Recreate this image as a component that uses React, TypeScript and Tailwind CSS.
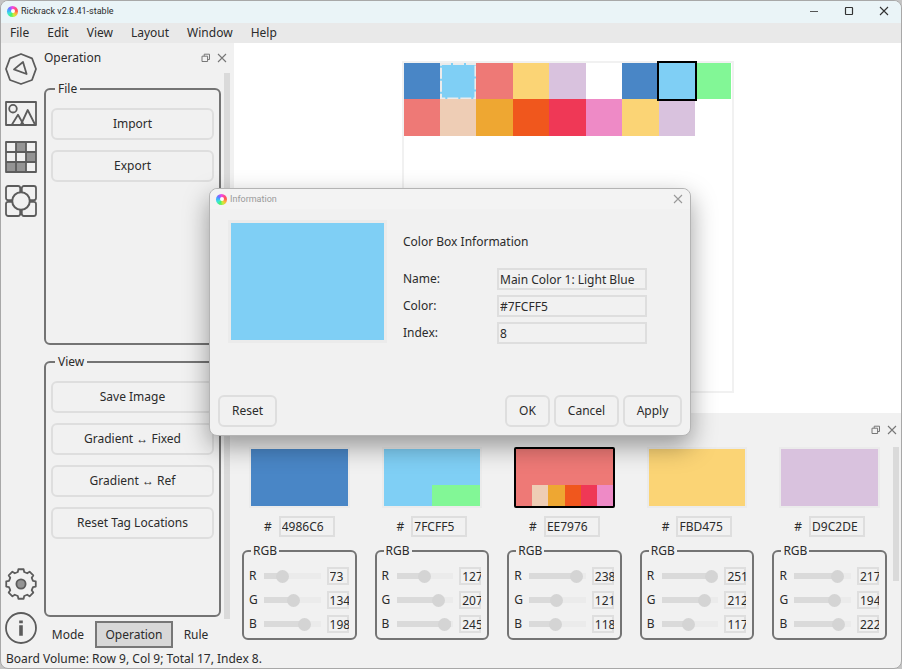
import type { ReactNode } from "react";

const INK = "#5c5c5c";

function ColorWheel() {
  return (
    <span
      aria-hidden="true"
      className="flex h-[11px] w-[11px] shrink-0 items-center justify-center rounded-full bg-[conic-gradient(#f04ae8,#ff4a8c,#ff5a4c,#ffb03c,#c8f03c,#4af06a,#3ce8d4,#3cb0ff,#7a6aff,#f04ae8)]"
    >
      <span className="h-1 w-1 rounded-full bg-white" />
    </span>
  );
}

function FloatIcon() {
  return (
    <svg width="10" height="10" viewBox="0 0 10 10" fill="none" stroke="#777" strokeWidth="1">
      <path d="M1 3.2h5.6v5.3H1zM3.2 3.2V1.2h5.3v5.3H6.6" />
    </svg>
  );
}

function CloseIcon({ color = "#777" }: { color?: string }) {
  return (
    <svg width="10" height="10" viewBox="0 0 10 10" fill="none" stroke={color} strokeWidth="1.1">
      <path d="M1 1l8 8M9 1l-8 8" />
    </svg>
  );
}

function Glyph({ children }: { children: ReactNode }) {
  return (
    <svg width="32" height="32" viewBox="0 0 32 32" fill="none" stroke={INK} strokeWidth="1.8" strokeLinejoin="round">
      {children}
    </svg>
  );
}

function WheelGlyph() {
  return (
    <Glyph>
      <path d="M16 1L27 5.3 31 16 27 27 16 31 5 27 1 16 5 5.3Z" />
      <path d="M18 9L9 16.4 21.6 21Z" />
    </Glyph>
  );
}

function ImageGlyph() {
  return (
    <Glyph>
      <rect x="1" y="5" width="30" height="23" />
      <circle cx="8" cy="11.7" r="3.8" />
      <path d="M7 27.5L13 17.7 18.5 27.5M16 27.5L22.7 13 30 27.5" />
    </Glyph>
  );
}

function BoardGlyph() {
  return (
    <Glyph>
      <path d="M11 1h10v10H11zM21 11h10v10H21zM1 21h20v10H1z" fill="#949494" stroke="none" />
      <path d="M1 1h30v30H1zM11 1v30M21 1v30M1 11h30M1 21h30" />
    </Glyph>
  );
}

function DepotGlyph() {
  return (
    <Glyph>
      <rect x="1" y="1" width="14.2" height="14.2" rx="2.2" />
      <rect x="16.8" y="1" width="14.2" height="14.2" rx="2.2" />
      <rect x="1" y="16.8" width="14.2" height="14.2" rx="2.2" />
      <rect x="16.8" y="16.8" width="14.2" height="14.2" rx="2.2" />
      <path d="M4.5 15.2h23v1.6h-23zM15.2 4.5h1.6v23h-1.6z" fill={INK} stroke="none" />
      <circle cx="16" cy="16" r="8.8" fill="#f1f1f1" strokeWidth="2" />
    </Glyph>
  );
}

function gearPath(): string {
  const points: string[] = [];
  for (let i = 0; i < 8; i++) {
    const mid = i * 45 - 90;
    const corners: [number, number][] = [
      [mid - 15, 12.4],
      [mid - 10, 15],
      [mid + 10, 15],
      [mid + 15, 12.4],
    ];
    for (const [deg, r] of corners) {
      const a = (deg * Math.PI) / 180;
      points.push(`${(16 + r * Math.cos(a)).toFixed(2)} ${(16 + r * Math.sin(a)).toFixed(2)}`);
    }
  }
  return `M${points.join("L")}Z`;
}

function GearGlyph() {
  return (
    <Glyph>
      <path d={gearPath()} />
      <circle cx="16" cy="16" r="4.6" fill="#949494" />
    </Glyph>
  );
}

function InfoGlyph() {
  return (
    <Glyph>
      <circle cx="16" cy="16" r="15" />
      <path d="M14.2 8.5h3.6v2.8h-3.6zM14.2 13.2h3.6v10.6h-3.6z" fill={INK} stroke="none" />
    </Glyph>
  );
}

function ToolButton({ label, children }: { label: string; children: ReactNode }) {
  return (
    <button type="button" aria-label={label} className="h-8 w-8">
      {children}
    </button>
  );
}

function PushButton({ children, className = "" }: { children: ReactNode; className?: string }) {
  return (
    <button
      type="button"
      className={`h-8 shrink-0 rounded-md border-2 border-[#dedede] bg-[#f1f1f1] text-center ${className}`}
    >
      {children}
    </button>
  );
}

function Group({ title, children }: { title: string; children: ReactNode }) {
  return (
    <fieldset className="min-w-0 flex-1 rounded-md border-2 border-[#747474] px-[5px]">
      <legend className="ml-1 px-[3px] leading-4">{title}</legend>
      <div className="flex flex-col gap-[10px] pt-[11px]">{children}</div>
    </fieldset>
  );
}

const MENUS = ["File", "Edit", "View", "Layout", "Window", "Help"];

const BOARD: { color: string; state?: "main" | "active" }[] = [
  { color: "#4986c6" },
  { color: "#7fcff5", state: "main" },
  { color: "#ee7976" },
  { color: "#fbd475" },
  { color: "#d9c2de" },
  { color: "#ffffff" },
  { color: "#4986c6" },
  { color: "#7fcff5", state: "active" },
  { color: "#82f796" },
  { color: "#ee7976" },
  { color: "#eecdb5" },
  { color: "#eea732" },
  { color: "#f0571d" },
  { color: "#ef3856" },
  { color: "#ee8ac6" },
  { color: "#fbd475" },
  { color: "#d9c2de" },
];

const PALETTE: { hex: string; rgb: [number, number, number]; subs: string[]; selected?: boolean }[] = [
  { hex: "4986C6", rgb: [73, 134, 198], subs: [] },
  { hex: "7FCFF5", rgb: [127, 207, 245], subs: ["#82f796"] },
  { hex: "EE7976", rgb: [238, 121, 118], subs: ["#eecdb5", "#eea732", "#f0571d", "#ef3856", "#ee8ac6"], selected: true },
  { hex: "FBD475", rgb: [251, 212, 117], subs: [] },
  { hex: "D9C2DE", rgb: [217, 194, 222], subs: [] },
];

function ChannelRow({ name, value, hex }: { name: string; value: number; hex: string }) {
  const id = `${hex}-${name}`;
  const stop = `${(value / 255) * 100}%`;
  return (
    <div className="flex h-[18px] items-center">
      <label htmlFor={id} className="w-[15px] shrink-0">
        {name}
      </label>
      <input
        id={id}
        type="range"
        min={0}
        max={255}
        defaultValue={value}
        style={{ backgroundImage: `linear-gradient(to right, #dadada ${stop}, #ebebeb ${stop})` }}
        className="h-[6px] min-w-0 flex-1 appearance-none [&::-webkit-slider-thumb]:h-[13px] [&::-webkit-slider-thumb]:w-[13px] [&::-webkit-slider-thumb]:appearance-none [&::-webkit-slider-thumb]:rounded-full [&::-webkit-slider-thumb]:bg-[#d4d4d4]"
      />
      <input
        type="text"
        aria-label={`${name} value of ${hex}`}
        defaultValue={value}
        className="ml-[6px] h-[18px] w-[22px] shrink-0 pl-[3px] shadow-[inset_0_0_0_2px_#dedede]"
      />
    </div>
  );
}

function PaletteColumn({ item }: { item: (typeof PALETTE)[number] }) {
  return (
    <div className="flex min-w-0 flex-col">
      <div
        className={`mx-[7px] flex h-[61px] items-end justify-end border-2 ${item.selected ? "rounded-xs border-black" : "border-[#ebebeb]"}`}
        style={{ backgroundColor: `#${item.hex}` }}
      >
        {item.subs.map((c) => (
          <span
            key={c}
            className={`h-[21px] ${item.subs.length === 1 ? "w-1/2" : "w-1/6"}`}
            style={{ backgroundColor: c }}
          />
        ))}
      </div>
      <div className="mt-2 flex items-center justify-center">
        <label htmlFor={`hex-${item.hex}`} className="mr-[7px]">
          #
        </label>
        <input
          id={`hex-${item.hex}`}
          type="text"
          defaultValue={item.hex}
          className="h-[21px] w-14 border-2 border-[#dedede] pl-px"
        />
      </div>
      <fieldset className="mt-[6px] min-w-0 rounded-md border-2 border-[#747474] pr-[6px] pl-[5px]">
        <legend className="ml-[2px] px-[2px] leading-4">RGB</legend>
        <div className="flex flex-col gap-[6px] pt-2 pb-[5px]">
          <ChannelRow name="R" value={item.rgb[0]} hex={item.hex} />
          <ChannelRow name="G" value={item.rgb[1]} hex={item.hex} />
          <ChannelRow name="B" value={item.rgb[2]} hex={item.hex} />
        </div>
      </fieldset>
    </div>
  );
}

function OperationDock() {
  return (
    <aside className="flex w-[193px] shrink-0 flex-col">
      <header className="flex h-[30px] shrink-0 items-center pr-[7px] pb-px pl-[3px]">
        <h2 className="flex-1">Operation</h2>
        <button type="button" aria-label="Float Operation" className="mr-[6px]">
          <FloatIcon />
        </button>
        <button type="button" aria-label="Close Operation">
          <CloseIcon />
        </button>
      </header>
      <div className="flex min-h-0 flex-1 pr-1 pl-[3px]">
        <div className="mr-[3px] flex min-w-0 flex-1 flex-col gap-[9px] pt-2 pb-[2px]">
          <Group title="File">
            <PushButton>Import</PushButton>
            <PushButton>Export</PushButton>
          </Group>
          <Group title="View">
            <PushButton>Save Image</PushButton>
            <PushButton>Gradient ↔ Fixed</PushButton>
            <PushButton>Gradient ↔ Ref</PushButton>
            <PushButton>Reset Tag Locations</PushButton>
          </Group>
        </div>
        <div className="w-[6px] bg-[#dadada]" />
      </div>
      <nav className="flex h-[29px] shrink-0 items-stretch pt-[2px]">
        <button type="button" className="w-[54px]">
          Mode
        </button>
        <button type="button" className="w-[78px] border-2 border-[#777] bg-[#d8d8d8]">
          Operation
        </button>
        <button type="button" className="w-[46px]">
          Rule
        </button>
      </nav>
    </aside>
  );
}

function Board() {
  return (
    <section className="flex min-h-0 flex-1 justify-center bg-white pt-[18px] pb-5">
      <div className="aspect-square h-full border-2 border-[#f1f1f1]">
        <div className="grid grid-cols-9">
          {BOARD.map((cell, i) => (
            <div
              key={i}
              className={`relative aspect-square ${cell.state === "active" ? "z-10 outline-2 outline-black" : ""}`}
              style={{ backgroundColor: cell.color }}
            >
              {cell.state === "main" && (
                <svg className="h-full w-full" fill="none" stroke="#ebebeb" strokeWidth="4" strokeDasharray="11 2">
                  <rect width="100%" height="100%" />
                </svg>
              )}
            </div>
          ))}
        </div>
      </div>
    </section>
  );
}

function ResultDock() {
  return (
    <section className="shrink-0">
      <header className="flex h-[34px] items-center justify-end pr-1">
        <button type="button" aria-label="Float results" className="mr-[6px]">
          <FloatIcon />
        </button>
        <button type="button" aria-label="Close results">
          <CloseIcon />
        </button>
      </header>
      <div className="flex pr-[2px] pb-2 pl-2">
        <div className="mr-[6px] grid min-w-0 flex-1 grid-cols-5 gap-[18px]">
          {PALETTE.map((item) => (
            <PaletteColumn key={item.hex} item={item} />
          ))}
        </div>
        <div className="h-[134px] w-[6px] bg-[#dadada]" />
      </div>
    </section>
  );
}

const FIELDS = [
  { label: "Name:", value: "Main Color 1: Light Blue" },
  { label: "Color:", value: "#7FCFF5" },
  { label: "Index:", value: "8" },
];

function InformationDialog() {
  return (
    <div
      role="dialog"
      aria-labelledby="info-title"
      className="absolute top-[187px] left-[208px] z-20 w-[482px] rounded-lg border border-[#b4b4b4] bg-[#f1f1f1] shadow-[0_10px_26px_rgba(0,0,0,0.38)]"
    >
      <header className="flex h-5 items-center rounded-t-lg bg-[#f3f3f3] pr-[7px] pl-[6px]">
        <ColorWheel />
        <h2 id="info-title" className="ml-[3px] flex-1 font-[Roboto,sans-serif] text-[9px] text-[#9a9a9a]">
          Information
        </h2>
        <button type="button" aria-label="Close dialog">
          <CloseIcon color="#999" />
        </button>
      </header>
      <div className="flex px-[18px] pt-[11px]">
        <div className="h-[123px] w-[159px] border-3 border-[#ebebeb] bg-[#7fcff5]" />
        <div className="ml-4 flex-1 pt-[14px]">
          <h3 className="leading-4">Color Box Information</h3>
          <div className="mt-[18px] flex flex-col gap-[5px]">
            {FIELDS.map((f) => (
              <div key={f.label} className="flex items-center">
                <label htmlFor={`field-${f.label}`} className="w-[94px]">
                  {f.label}
                </label>
                <input
                  id={`field-${f.label}`}
                  type="text"
                  defaultValue={f.value}
                  className="h-[22px] w-[150px] border-2 border-[#dedede] pl-px"
                />
              </div>
            ))}
          </div>
        </div>
      </div>
      <footer className="mt-[51px] flex gap-1 px-2 pb-2">
        <PushButton className="mr-auto w-[59px]">Reset</PushButton>
        <PushButton className="w-[45px]">OK</PushButton>
        <PushButton className="w-[65px]">Cancel</PushButton>
        <PushButton className="w-[59px]">Apply</PushButton>
      </footer>
    </div>
  );
}

export default function App() {
  return (
    <div className="h-screen bg-[#c4c4c4] font-['Noto_Sans',sans-serif] text-xs text-[#2b2b2b]">
      <div className="relative flex h-full flex-col overflow-hidden rounded-lg border border-[#a8a8a8] bg-[#f1f1f1]">
        <header className="flex h-[22px] shrink-0 items-center bg-[#eaf4f7] pb-[2px] pl-[6px]">
          <ColorWheel />
          <h1 className="ml-[3px] flex-1 font-[Roboto,sans-serif] text-[9px]">Rickrack v2.8.41-stable</h1>
          <button type="button" aria-label="Minimize" className="flex w-[35px] justify-center">
            <svg width="10" height="10" viewBox="0 0 10 10" stroke="#555" strokeWidth="1">
              <path d="M1 5.5h8" />
            </svg>
          </button>
          <button type="button" aria-label="Maximize" className="flex w-[35px] justify-center">
            <svg width="10" height="10" viewBox="0 0 10 10" fill="none" stroke="#333" strokeWidth="1.2">
              <rect x="1.5" y="1.5" width="7" height="7" rx="0.5" />
            </svg>
          </button>
          <button type="button" aria-label="Close" className="flex w-[35px] justify-center">
            <CloseIcon color="#333" />
          </button>
        </header>
        <nav className="flex h-5 shrink-0 items-center bg-[#e9e9e9]">
          {MENUS.map((m) => (
            <button key={m} type="button" className="px-[9px]">
              {m}
            </button>
          ))}
        </nav>
        <main className="flex min-h-0 flex-1">
          <div className="flex w-10 shrink-0 flex-col gap-3 pt-[10px] pb-1 pl-1">
            <ToolButton label="Wheel">
              <WheelGlyph />
            </ToolButton>
            <ToolButton label="Image">
              <ImageGlyph />
            </ToolButton>
            <ToolButton label="Board">
              <BoardGlyph />
            </ToolButton>
            <ToolButton label="Depot">
              <DepotGlyph />
            </ToolButton>
            <div className="flex-1" />
            <ToolButton label="Settings">
              <GearGlyph />
            </ToolButton>
            <ToolButton label="Info">
              <InfoGlyph />
            </ToolButton>
          </div>
          <OperationDock />
          <div className="flex min-w-0 flex-1 flex-col">
            <Board />
            <ResultDock />
          </div>
        </main>
        <footer className="flex h-5 shrink-0 items-center pt-px pl-[5px]">
          Board Volume: Row 9, Col 9; Total 17, Index 8.
        </footer>
        <InformationDialog />
      </div>
    </div>
  );
}
